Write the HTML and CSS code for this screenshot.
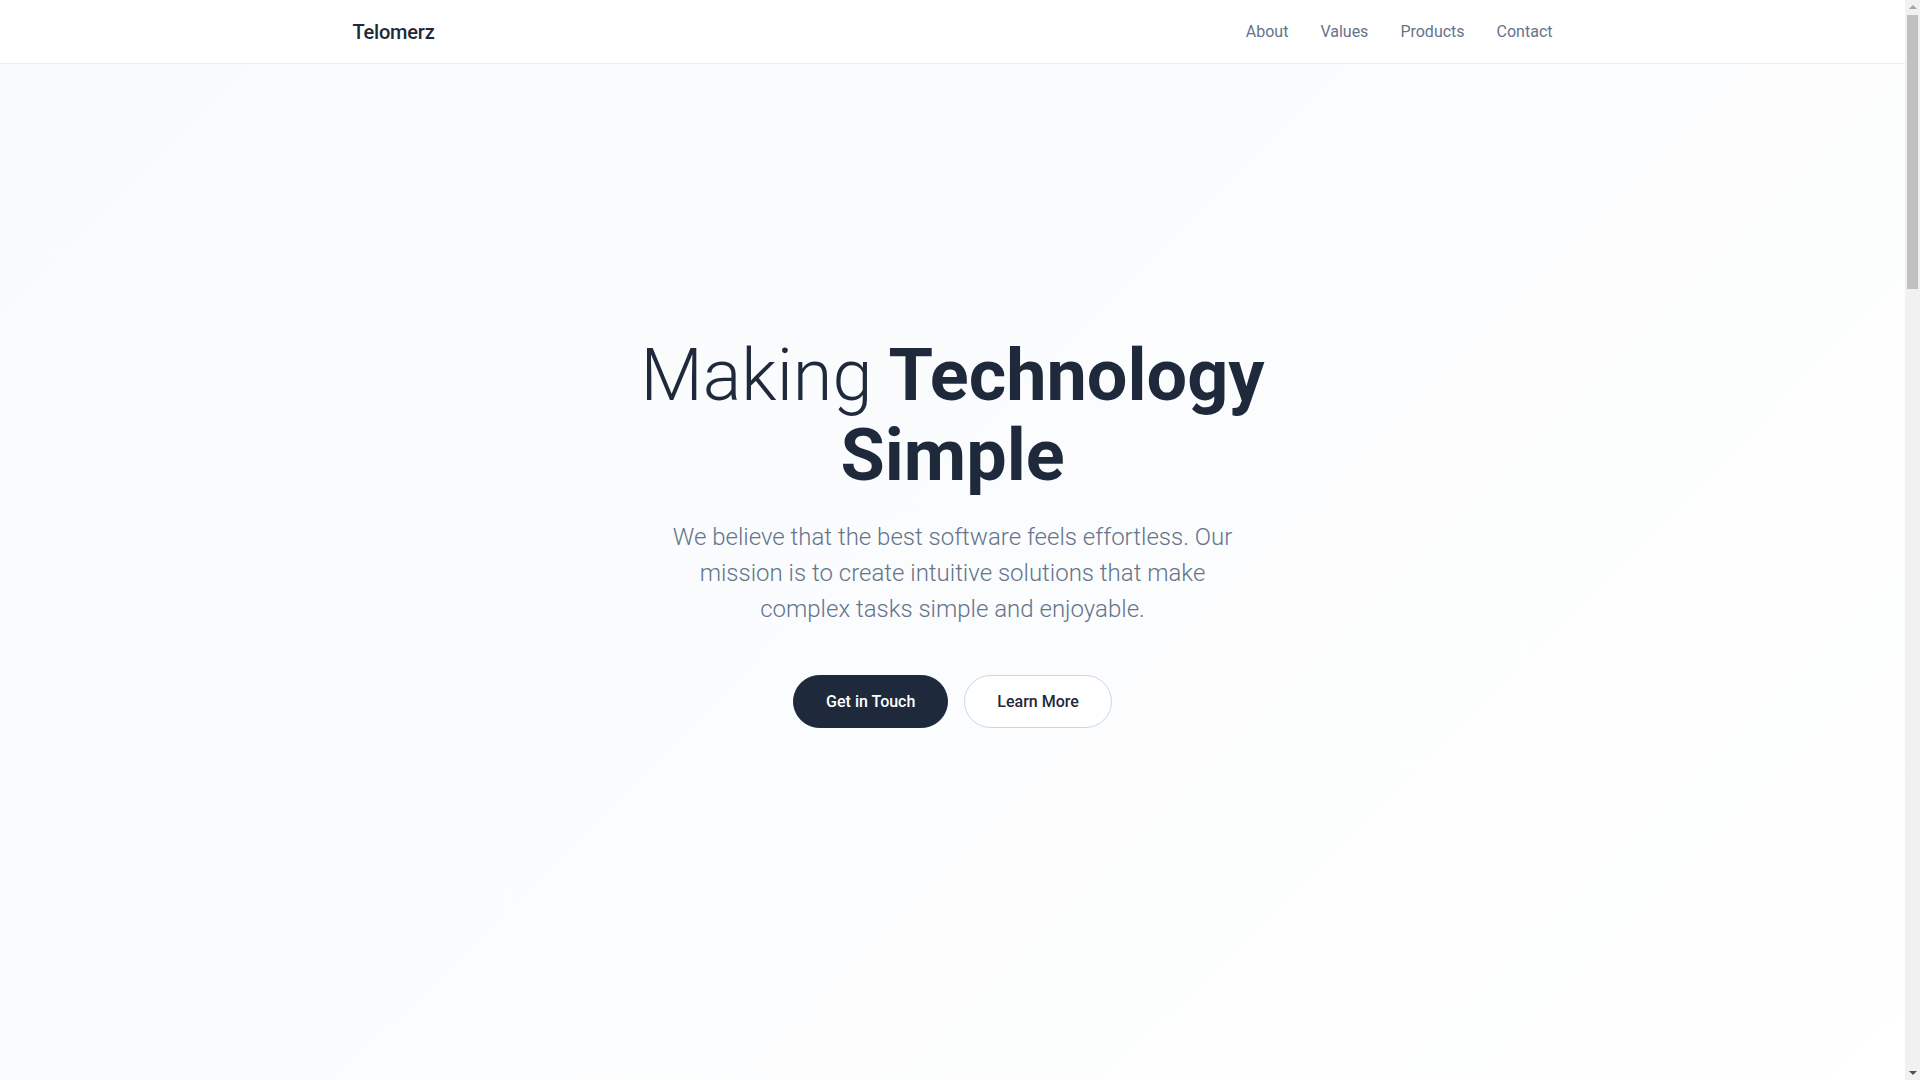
FILE: index.html
```html
<!DOCTYPE html>
<html lang="en">
<head>
<meta charset="utf-8">
<title>Telomerz</title>
<link rel="stylesheet" href="styles.css">
</head>
<body>
<header class="site-header">
  <div class="container header-inner">
    <a class="logo" href="#">Telomerz</a>
    <nav class="nav">
      <a href="#about">About</a>
      <a href="#values">Values</a>
      <a href="#products">Products</a>
      <a href="#contact">Contact</a>
    </nav>
  </div>
</header>
<main>
  <section class="hero">
    <div class="hero-content">
      <h1 class="hero-title"><span class="light">Making</span> Technology Simple</h1>
      <p class="hero-text">We believe that the best software feels effortless. Our mission is to create intuitive solutions that make complex tasks simple and enjoyable.</p>
      <div class="hero-actions">
        <a class="btn btn-dark" href="#contact">Get in Touch</a>
        <a class="btn btn-outline" href="#about">Learn More</a>
      </div>
    </div>
  </section>
  <section class="section" id="about">
    <div class="container">
      <h2 class="section-title">About</h2>
      <p class="section-text">We build thoughtful software for people who value clarity.</p>
    </div>
  </section>
  <section class="section" id="values">
    <div class="container">
      <h2 class="section-title">Values</h2>
      <p class="section-text">Simplicity, craft and care in everything we make.</p>
    </div>
  </section>
  <section class="section" id="products">
    <div class="container">
      <h2 class="section-title">Products</h2>
      <p class="section-text">Tools designed to make complex tasks simple.</p>
    </div>
  </section>
  <section class="section" id="contact">
    <div class="container">
      <h2 class="section-title">Contact</h2>
      <p class="section-text">We would love to hear from you.</p>
    </div>
  </section>
</main>
<div class="scrollbar" aria-hidden="true">
  <span class="sb-arrow sb-up"></span>
  <span class="sb-thumb"></span>
  <span class="sb-arrow sb-down"></span>
</div>
</body>
</html>
```
FILE: styles.css
```css
* { box-sizing: border-box; }
html, body { margin: 0; padding: 0; }
body {
  font-family: Roboto, "Liberation Sans", Arial, sans-serif;
  color: #1e293b;
  background: #ffffff;
  margin-right: 15px;
}
a { text-decoration: none; color: inherit; }

.container {
  max-width: 1280px;
  margin: 0 auto;
  padding: 0 40px;
}

.site-header {
  position: sticky;
  top: 0;
  z-index: 10;
  background: #ffffff;
  border-bottom: 1px solid #e9edf2;
}
.header-inner {
  height: 63px;
  display: flex;
  align-items: center;
  justify-content: space-between;
}
.logo {
  font-size: 20px;
  font-weight: 500;
  color: #1e293b;
  letter-spacing: -0.2px;
}
.nav {
  display: flex;
  gap: 32px;
}
.nav a {
  font-size: 16px;
  color: #64748b;
}

.hero {
  min-height: calc(100vh - 64px);
  display: flex;
  align-items: center;
  justify-content: center;
  padding: 0 24px 80px;
  background: linear-gradient(135deg, #f8fafc 0%, #fbfcfd 50%, #ffffff 100%);
  text-align: center;
}
.hero-content {
  display: flex;
  flex-direction: column;
  align-items: center;
}
.hero-title {
  margin: 0;
  max-width: 768px;
  font-size: 72px;
  line-height: 1.1;
  font-weight: 700;
  color: #1e293b;
}
.hero-title .light { font-weight: 300; }
.hero-text {
  margin: 24px 0 0;
  max-width: 576px;
  font-size: 24px;
  line-height: 36px;
  font-weight: 300;
  color: #64748b;
}
.hero-actions {
  margin-top: 48px;
  display: flex;
  gap: 16px;
}
.btn {
  display: inline-block;
  padding: 16px 32px;
  border-radius: 999px;
  font-size: 16px;
  line-height: 19px;
  font-weight: 500;
}
.btn-dark {
  background: #1e293b;
  color: #ffffff;
  border: 1px solid #1e293b;
}
.btn-outline {
  background: #ffffff;
  color: #1e293b;
  border: 1px solid #cbd5e1;
}

.section {
  min-height: 760px;
  padding: 96px 0;
  background: #ffffff;
}
.section-title {
  margin: 0 0 16px;
  font-size: 40px;
  font-weight: 700;
}
.section-text {
  margin: 0;
  font-size: 18px;
  color: #64748b;
}

/* browser scrollbar chrome (drawn over the right edge) */
.scrollbar {
  position: fixed;
  top: 0;
  right: 0;
  width: 15px;
  height: 100vh;
  background: #f1f1f1;
  z-index: 20;
  display: flex;
  flex-direction: column;
  align-items: center;
}
.sb-arrow {
  width: 0;
  height: 0;
  border-left: 4px solid transparent;
  border-right: 4px solid transparent;
}
.sb-up {
  margin-top: 5px;
  border-bottom: 4px solid #a3a3a3;
}
.sb-thumb {
  margin-top: 6px;
  width: 11px;
  height: 274px;
  background: #c1c1c1;
}
.sb-down {
  margin-top: auto;
  margin-bottom: 5px;
  border-top: 4px solid #505050;
}
```
